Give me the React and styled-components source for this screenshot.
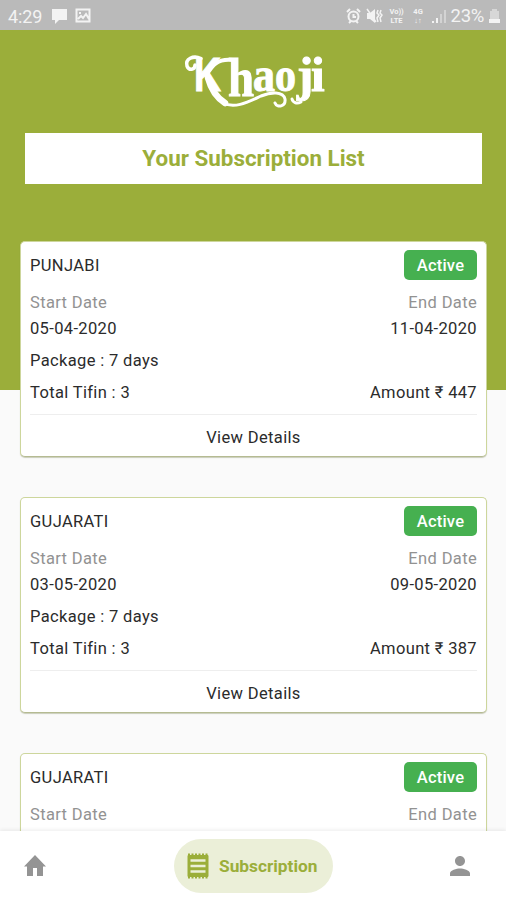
import React from 'react';
import styled, { createGlobalStyle } from 'styled-components';
import { MdPerson } from 'react-icons/md';

const GlobalStyle = createGlobalStyle`
  * {
    box-sizing: border-box;
  }

  body {
    margin: 0;
    overflow: hidden;
    font-family: Roboto, "Noto Sans", sans-serif;
  }
`;

const Screen = styled.div`
  display: flex;
  flex-direction: column;
  width: 506px;
  height: 900px;
  overflow: hidden;
  background: linear-gradient(#9bae3a 390px, #fafafa 390px);
`;

const StatusBar = styled.div`
  display: flex;
  flex: none;
  align-items: center;
  justify-content: space-between;
  height: 30px;
  padding: 2px 6px 0 8px;
  background-color: #bababa;
  color: #f3f3f3;
`;

const StatusGroup = styled.div`
  display: flex;
  align-items: center;
  gap: ${props => props.$gap};
`;

const Clock = styled.span`
  width: 36px;
  font-size: 18px;
  letter-spacing: -.1px;
`;

const Percent = styled.span`
  font-size: 18.5px;
  letter-spacing: -.3px;
`;

const Network = styled.span`
  width: ${props => props.$width};
  font-size: 7.5px;
  font-weight: 700;
  line-height: 9px;
  text-align: center;
  white-space: nowrap;
`;

const Header = styled.header`
  display: flex;
  flex: none;
  flex-direction: column;
  align-items: center;
  height: 211px;
  padding: 20px 24px 0 25px;
`;

const Title = styled.h1`
  width: 100%;
  height: 51px;
  margin: 13px 0 0;
  background-color: #fff;
  color: #9bae3a;
  font-size: 22.4px;
  font-weight: 700;
  line-height: 51px;
  text-align: center;
`;

const List = styled.main`
  display: flex;
  flex: 1;
  flex-direction: column;
  gap: 40px;
  min-height: 0;
  padding: 0 19px 0 20px;
  overflow: hidden;
`;

const Card = styled.section`
  flex: none;
  height: 216px;
  padding: 8px 9px 0;
  border: 1px solid #cdd69c;
  border-bottom-color: #b5bb92;
  border-radius: 5px;
  background-color: #fff;
  box-shadow: 0 1px 1px rgba(90, 100, 40, .3);
  color: #2b2b2b;
  font-size: 16.5px;
  letter-spacing: .35px;
`;

const Row = styled.div`
  display: flex;
  align-items: center;
  justify-content: space-between;
  height: ${props => props.$height};
  color: ${props => props.$muted ? '#929292' : 'inherit'};
`;

const Badge = styled.span`
  width: 73px;
  height: 30px;
  border-radius: 5px;
  background-color: #46b050;
  color: #fff;
  font-weight: 500;
  letter-spacing: .2px;
  line-height: 31px;
  text-align: center;
`;

const Details = styled.div`
  height: 43px;
  margin-top: 18px;
  border-top: 1px solid #eee;
  line-height: 46px;
  text-align: center;
`;

const Nav = styled.nav`
  display: flex;
  flex: none;
  align-items: center;
  height: 69px;
  padding: 0 31px 0 20px;
  background-color: #fff;
  box-shadow: 0 -1px 4px rgba(0, 0, 0, .08);
  color: #949494;
  z-index: 1;
`;

const NavActive = styled.div`
  display: flex;
  align-items: center;
  gap: 6px;
  width: 159px;
  height: 54px;
  margin: 0 auto 0 124px;
  padding-left: 9px;
  border-radius: 27px;
  background-color: #ebefd8;
  color: #9bae3a;
  font-size: 17.3px;
  font-weight: 700;
`;

const subscriptions = [
  { id: 1, name: 'PUNJABI', start: '05-04-2020', end: '11-04-2020', amount: 447 },
  { id: 2, name: 'GUJARATI', start: '03-05-2020', end: '09-05-2020', amount: 387 },
  { id: 3, name: 'GUJARATI', start: '03-05-2020', end: '09-05-2020', amount: 387 },
];

const Logo = () => (
  <svg width="146" height="70" viewBox="0 0 146 70" fill="#fff" fontFamily="'Liberation Serif', serif" fontWeight="700" fontSize="49">
    <text stroke="#fff" strokeWidth="1">
      <tspan x="13" y="41" textLength="27" lengthAdjust="spacingAndGlyphs" fontFamily="'Liberation Sans', sans-serif">K</tspan>
      <tspan x="47" y="46" fontSize="54" textLength="26" lengthAdjust="spacingAndGlyphs">h</tspan>
      <tspan x="72" y="41" textLength="22" lengthAdjust="spacingAndGlyphs">a</tspan>
      <tspan x="94" y="41" textLength="21" lengthAdjust="spacingAndGlyphs">o</tspan>
      <tspan x="116" y="41">j</tspan>
      <tspan x="130" y="41">i</tspan>
    </text>
    <g fill="none" stroke="#fff" strokeLinecap="round">
      <path d="M20 8.500C12 5 4 9 6 16c2 5 8 4 8-1" strokeWidth="3.500" />
      <path d="M26 24C31 16 36 8 52 10" strokeWidth="4" />
      <path d="M27 28c3 11 9 20 17 25" strokeWidth="6.500" />
      <path d="M42 53c12 6 25-1 38-7 10-4 22-5 24 3 1 8-8 9-10 4" strokeWidth="3" />
      <path d="M120 52c-4 2-8 1-9-3" strokeWidth="3" />
    </g>
  </svg>
);

const HomeIcon = () => (
  <svg width="30" height="30" viewBox="0 0 30 30" fill="currentColor">
    <path d="M15 4L26 15.500h-3V25h-6v-8h-4v8H7v-9.500H4z" />
  </svg>
);

const ReceiptIcon = () => (
  <svg width="30" height="30" viewBox="0 0 30 30">
    <path d="M5 4.500h20v21H5z" fill="currentColor" stroke="currentColor" />
    <path d="M5 3.500h21M5 26.500h21" stroke="currentColor" strokeWidth="2" strokeDasharray="2 1.500" />
    <path d="M7.500 9.500h15M7.500 15h15M7.500 20.500h15" stroke="#ebefd8" strokeWidth="2.400" />
  </svg>
);

const StatusIcons = () => (
  <StatusBar>
    <StatusGroup $gap="7px">
      <Clock>4:29</Clock>
      <svg width="17" height="16" viewBox="0 0 17 16" fill="currentColor">
        <path d="M1 1h15v11H8l-4 4v-4H1z" />
      </svg>
      <svg width="16" height="16" viewBox="0 0 16 16" fill="none" stroke="currentColor" strokeWidth="2">
        <path d="M1.500 1.500h13v12h-13zM3 11l3-3 2 2 3-4 3 5" />
        <path d="M5 4v2" />
      </svg>
    </StatusGroup>
    <StatusGroup $gap="5px">
      <svg width="15" height="16" viewBox="0 0 15 16" fill="none" stroke="currentColor" strokeWidth="2">
        <circle cx="7.500" cy="8.500" r="5" />
        <path d="M7.500 6v3h2.500M1 4l3-3M14 4l-3-3M3 15l2-2M12 15l-2-2" />
      </svg>
      <svg width="17" height="16" viewBox="0 0 17 16" fill="currentColor">
        <path d="M1 5h3l5-4v14l-5-4H1z" />
        <path d="M1 1l9 13M12 2l-1 3 2 2-2 3 1 4M15 2l-1 3 2 2-2 3 1 4" fill="none" stroke="currentColor" strokeWidth="1.500" />
      </svg>
      <Network $width="18px">Vo))<br />LTE</Network>
      <Network $width="15px">4G<br />↓↑</Network>
      <svg width="15" height="15" viewBox="0 0 15 15" stroke="currentColor" strokeWidth="2">
        <path d="M2 12v2M6 9v5" />
        <path d="M10 5v9M14 1v13" opacity=".45" />
      </svg>
      <Percent>23%</Percent>
      <svg width="11" height="15" viewBox="0 0 11 15" fill="currentColor">
        <path d="M3 0h5v2h2v9H1V2h2z" opacity=".5" />
        <path d="M0 10h11v4H0z" />
      </svg>
    </StatusGroup>
  </StatusBar>
);

const SubscriptionCard = props => {
  return (
    <Card>
      <Row $height="30px">
        <span>{props.name}</span>
        <Badge>Active</Badge>
      </Row>
      <Row $height="44px" $muted>
        <span>Start Date</span>
        <span>End Date</span>
      </Row>
      <Row $height="8px">
        <span>{props.start}</span>
        <span>{props.end}</span>
      </Row>
      <Row $height="56px">
        <span>Package : 7 days</span>
      </Row>
      <Row $height="8px">
        <span>Total Tifin : 3</span>
        <span>Amount ₹ {props.amount}</span>
      </Row>
      <Details>View Details</Details>
    </Card>
  );
}

const App = () => {
  return (
    <Screen>
      <GlobalStyle />
      <StatusIcons />
      <Header>
        <Logo />
        <Title>Your Subscription List</Title>
      </Header>
      <List>
        {subscriptions.map(item => <SubscriptionCard key={item.id} {...item} />)}
      </List>
      <Nav>
        <HomeIcon />
        <NavActive>
          <ReceiptIcon />
          <span>Subscription</span>
        </NavActive>
        <MdPerson size={30} />
      </Nav>
    </Screen>
  );
}

export default App;
